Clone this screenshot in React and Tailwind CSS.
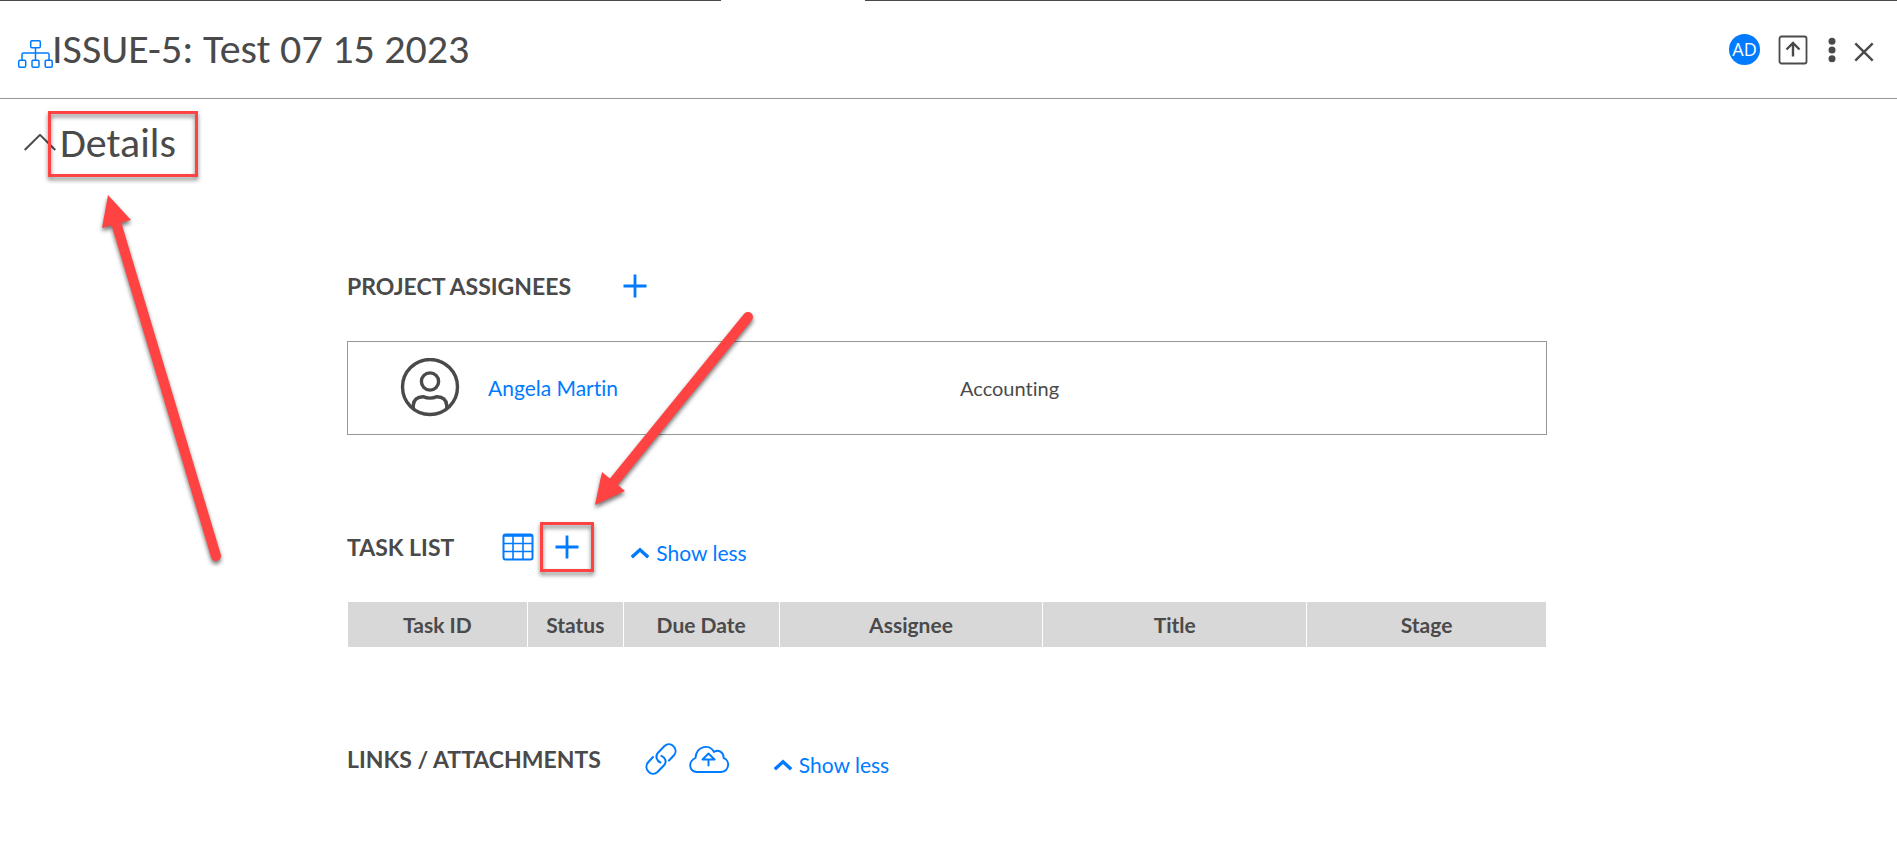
import React from "react";

const INK = "#4a4a4a";
const BLUE = "#007bff";

function SitemapIcon() {
  return (
    <svg className="h-[30px] w-9 shrink-0" viewBox="0 0 36 30" fill="none" stroke={BLUE} strokeWidth="1.5" aria-hidden="true">
      <rect x="13.700" y="1.700" width="9.600" height="7" rx="1.2" />
      <path d="M18.500 8.700V21M5 21V15.500Q5 14 6.500 14H30.500Q32 14 32 15.500V21" />
      <rect x="1.700" y="21.200" width="7" height="7" rx="1.2" />
      <rect x="15" y="21.200" width="7" height="7" rx="1.2" />
      <rect x="28.200" y="21.200" width="7" height="7" rx="1.2" />
    </svg>
  );
}

function PlusIcon() {
  return (
    <svg className="size-6" viewBox="0 0 24 24" stroke={BLUE} strokeWidth="2.8" aria-hidden="true">
      <path d="M12 .5V23.500M.5 12H23.500" />
    </svg>
  );
}

function TableIcon() {
  return (
    <svg className="h-7 w-8" viewBox="0 0 32 28" fill="none" stroke={BLUE} aria-hidden="true">
      <rect x="1.500" y="1.500" width="29" height="25" rx="2" strokeWidth="2" />
      <path d="M1.500 2.500H30.500" strokeWidth="2.600" />
      <path d="M1 10.500H31M1 18.500H31M11 3V26M21 3V26" strokeWidth="1.600" />
    </svg>
  );
}

function ChevronUp() {
  return (
    <svg className="h-3 w-5" viewBox="0 0 20 12" fill="none" stroke={BLUE} strokeWidth="3.400" aria-hidden="true">
      <path d="M1.800 10.300L10 2.800L18.200 10.300" />
    </svg>
  );
}

function ShowLess() {
  return (
    <button type="button" className="mt-3 flex items-center gap-[6px] text-[21px] leading-7 text-[#007bff]">
      <ChevronUp />
      Show less
    </button>
  );
}

function SectionTitle({ children }) {
  return <h3 className="text-[23px] leading-8 font-bold">{children}</h3>;
}

function Annotations() {
  return (
    <svg className="pointer-events-none absolute left-0 top-0 h-[600px] w-[780px]" viewBox="0 0 780 600" aria-hidden="true">
      <g fill="#ff4343" stroke="#ff4343" className="drop-shadow-[0px_3px_2px_rgba(0,0,0,0.55)]">
        <path d="M115 219L216 556" strokeWidth="10" strokeLinecap="round" />
        <path d="M108 195L131 220L102 228Z" stroke="none" />
        <path d="M748 317L612 484" strokeWidth="10" strokeLinecap="round" />
        <path d="M595 505L602 472L625 491Z" stroke="none" />
      </g>
    </svg>
  );
}

function Highlight() {
  return (
    <span className="pointer-events-none absolute inset-0 border-[3px] border-[#ff4343] drop-shadow-[0px_3px_2px_rgba(0,0,0,0.5)]" />
  );
}

const columns = [
  ["Task ID", "w-[15%]"],
  ["Status", "w-[8%]"],
  ["Due Date", "w-[13%]"],
  ["Assignee", "w-[22%]"],
  ["Title", "w-[22%]"],
  ["Stage", "w-[20%]"],
];

export default function App() {
  return (
    <div className="relative min-h-screen bg-white font-[Lato,sans-serif] text-[#4a4a4a] [font-variant-ligatures:none]">
      <div className="flex h-px justify-between">
        <div className="w-[38%] bg-[#4a4a4a]" />
        <div className="w-[54.4%] bg-[#4a4a4a]" />
      </div>

      <header className="flex h-[98px] items-center justify-between border-b border-[#979797] pl-[17px] pr-[23px]">
        <div className="flex items-center">
          <div className="pt-2">
            <SitemapIcon />
          </div>
          <h1 className="-ml-px pb-[2px] font-[Carlito,Lato,sans-serif] text-[42px] leading-[48px]">ISSUE-5: Test 07 15 2023</h1>
        </div>
        <div className="flex items-center">
          <span className="flex size-[31px] items-center justify-center rounded-full bg-[#007bff] pb-px font-['Open_Sans',sans-serif] text-lg text-white">
            AD
          </span>
          <button type="button" aria-label="Export" className="ml-[18px]">
            <svg className="size-[30px]" viewBox="0 0 30 30" fill="none" stroke={INK} aria-hidden="true">
              <rect x="1.500" y="1.500" width="27" height="27" rx="2" strokeWidth="1.800" />
              <path d="M15 21.500V8M8.500 14.500L15 8L21.500 14.500" strokeWidth="2.400" />
            </svg>
          </button>
          <button type="button" aria-label="More options" className="ml-5">
            <svg className="h-[26px] w-2" viewBox="0 0 8 26" fill={INK} aria-hidden="true">
              <circle cx="4" cy="4.300" r="3.500" />
              <circle cx="4" cy="13" r="3.500" />
              <circle cx="4" cy="21.700" r="3.500" />
            </svg>
          </button>
          <button type="button" aria-label="Close" className="ml-[18px] pt-1">
            <svg className="size-5" viewBox="0 0 20 20" stroke={INK} strokeWidth="2.400" aria-hidden="true">
              <path d="M1.300 1.300L18.700 18.700M18.700 1.300L1.300 18.700" />
            </svg>
          </button>
        </div>
      </header>

      <main className="pr-[3px]">
        <button type="button" className="ml-6 mt-3 flex h-[66px] items-center">
          <svg className="h-5 w-8" viewBox="0 0 32 20" fill="none" stroke={INK} strokeWidth="2" aria-hidden="true">
            <path d="M.7 16L16 .9L31.300 16" />
          </svg>
          <span className="relative -ml-2 flex h-full w-[150px] items-center pb-[2px] pl-3 font-[Carlito,Lato,sans-serif] text-[42px] leading-[48px]">
            Details
            <Highlight />
          </span>
        </button>

        <div className="mx-auto w-full max-w-[1200px]">
          <section className="mt-[93px]">
            <div className="flex items-center gap-[52px]">
              <SectionTitle>PROJECT ASSIGNEES</SectionTitle>
              <button type="button" aria-label="Add assignee">
                <PlusIcon />
              </button>
            </div>
            <div className="mt-[39px] flex h-[94px] items-center border border-[#979797] pl-[52px] text-[21px]">
              <svg className="size-[60px]" viewBox="0 0 60 60" fill="none" stroke={INK} strokeWidth="3.400" aria-hidden="true">
                <circle cx="30" cy="29" r="27.500" />
                <circle cx="30" cy="23.500" r="8.600" />
                <path d="M13.300 51V47Q14 39 23 38.700Q30 41.500 37 38.700Q46 39 46.700 47V51" />
              </svg>
              <a href="#angela" className="ml-7 w-[472px] text-[#007bff]">Angela Martin</a>
              <span className="text-xl">Accounting</span>
            </div>
          </section>

          <section className="mt-[87px]">
            <div className="flex h-[50px] items-center">
              <SectionTitle>TASK LIST</SectionTitle>
              <button type="button" aria-label="Table view" className="ml-12">
                <TableIcon />
              </button>
              <button
                type="button"
                aria-label="Add task"
                className="relative ml-[6px] flex h-[50px] w-[54px] items-center justify-center"
              >
                <PlusIcon />
                <Highlight />
              </button>
              <div className="ml-9">
                <ShowLess />
              </div>
            </div>
            <table className="mt-[30px] w-full table-fixed border-collapse">
              <thead>
                <tr className="h-[45px] bg-[#d8d8d8]">
                  {columns.map(([label, width]) => (
                    <th key={label} scope="col" className={`${width} border-x border-white text-center text-[21px] font-bold`}>
                      {label}
                    </th>
                  ))}
                </tr>
              </thead>
            </table>
          </section>

          <section className="mt-[87px] flex h-[50px] items-center">
            <SectionTitle>LINKS / ATTACHMENTS</SectionTitle>
            <button type="button" aria-label="Add link" className="ml-11">
              <svg className="size-8" viewBox="0 0 32 32" fill="none" stroke={BLUE} strokeWidth="2" strokeLinecap="round" aria-hidden="true">
                <path d="M24 17.500L29 12.300C34 6.500 26 -2.500 19.500 3L13 9.700C10 13 11.500 18 15.500 19.500" />
                <path d="M8 14L3 19.500C-2 25.500 6 34.500 12.500 29L19 22.300C22 19 20.500 14.500 16.500 12.800" />
              </svg>
            </button>
            <button type="button" aria-label="Upload file" className="ml-3">
              <svg className="h-7 w-10" viewBox="0 0 40 28" fill="none" stroke={BLUE} strokeWidth="1.900" strokeLinejoin="round" strokeLinecap="round" aria-hidden="true">
                <path d="M8 27H32C41 26 41 15 34.500 13C35 7 29 4 25 7C21 -1 7.500 0 6.500 13C-1 16.500 -.5 26.500 8 27Z" />
                <path d="M19.500 20.500V14.500M13.500 14.500L19.500 8.500L25.500 14.500Z" />
              </svg>
            </button>
            <div className="ml-11">
              <ShowLess />
            </div>
          </section>
        </div>
      </main>

      <Annotations />
    </div>
  );
}
